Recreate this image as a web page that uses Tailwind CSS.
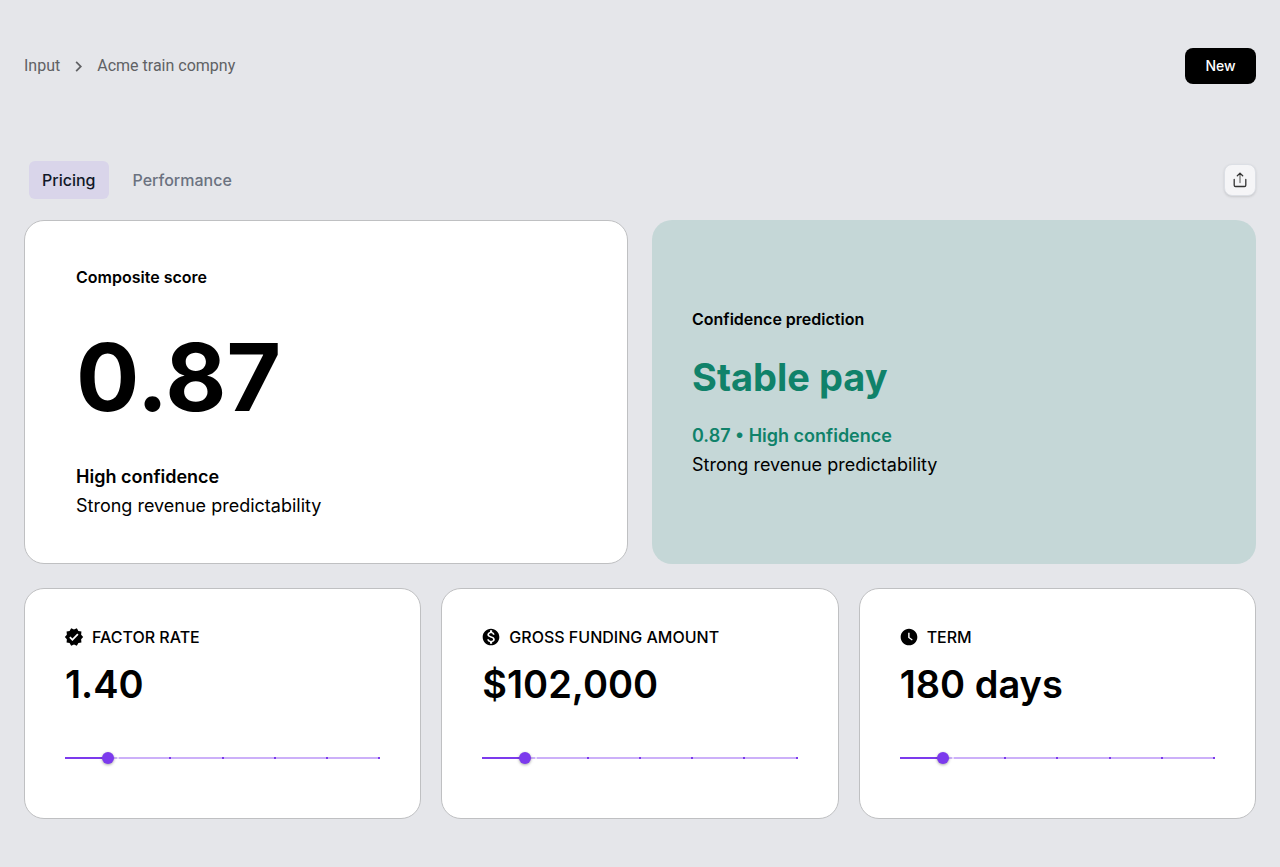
<!DOCTYPE html>
<html lang="en">
<head>
<meta charset="utf-8">
<meta name="viewport" content="width=device-width, initial-scale=1">
<title>Pricing</title>
<script src="https://cdn.jsdelivr.net/npm/@tailwindcss/browser@4"></script>
</head>
<body class="min-h-screen bg-[#e5e6ea] px-6 py-12 font-['Inter',sans-serif] text-black">
  <header class="flex h-9 items-center justify-between">
    <nav aria-label="Breadcrumb" class="flex items-center gap-2 font-['Roboto',sans-serif] text-base text-[#606164]">
      <a href="#">Input</a>
      <svg class="size-[21px]" viewBox="0 0 24 24" fill="currentColor" aria-hidden="true"><path d="M10 6 8.59 7.41 13.17 12l-4.58 4.59L10 18l6-6z"/></svg>
      <a href="#">Acme train compny</a>
    </nav>
    <button type="button" class="h-9 min-w-[71px] rounded-lg bg-black px-5 text-sm font-medium text-white">New</button>
  </header>

  <main>
    <div class="mt-[77px] flex items-center justify-between">
      <div role="tablist" class="ml-[5px] flex gap-3 text-base font-medium">
        <button type="button" role="tab" aria-selected="true" class="h-[38px] rounded-md bg-[#d9d5ea] px-[13px] text-[#111827]">Pricing</button>
        <button type="button" role="tab" aria-selected="false" class="h-[38px] rounded-md px-3 text-[#6b7280]">Performance</button>
      </div>
      <button type="button" aria-label="Share" class="flex size-8 items-center justify-center rounded-lg border border-[#dcdfe5] bg-[#f5f5f7] text-[#333] shadow-sm">
        <svg class="size-4" viewBox="0 0 16 16" fill="none" stroke="currentColor" stroke-width="1.3" stroke-linecap="round" stroke-linejoin="round" aria-hidden="true"><path d="M8 10.500V1.500" stroke="#777"/><path d="M5.300 3.700 8 1.300l2.700 2.400M2.200 7.500v5.700c0 .8.4 1.300 1.300 1.300h9c.9 0 1.300-.5 1.300-1.300V7.500"/></svg>
      </button>
    </div>

    <div class="mt-[21px] grid grid-cols-2 gap-6">
      <section class="flex min-h-[344px] flex-col justify-center rounded-[20px] border border-[#bfc0c2] bg-white px-[51px] pt-0.5">
        <h2 class="text-base leading-6 font-semibold">Composite score</h2>
        <p class="mt-10 mb-[38px] text-[94px] leading-[96px] font-bold">0.87</p>
        <p class="text-lg leading-7 font-semibold">High confidence</p>
        <p class="text-lg leading-[30px]">Strong revenue predictability</p>
      </section>
      <section class="flex min-h-[344px] flex-col justify-center rounded-[20px] bg-[#c5d7d7] px-10 pt-[3px]">
        <h2 class="text-base leading-6 font-semibold">Confidence prediction</h2>
        <p class="mt-[21px] mb-5 text-[38px] leading-[50px] font-bold text-[#10826a]">Stable pay</p>
        <p class="text-lg leading-7 font-semibold text-[#10826a]">0.87 • High confidence</p>
        <p class="text-lg leading-[30px]">Strong revenue predictability</p>
      </section>
    </div>

    <div class="mt-6 grid grid-cols-3 gap-5">
      <section class="rounded-[20px] border border-[#bfc0c2] bg-white px-10 pt-9 pb-[52px]">
        <label for="factor" class="flex items-center gap-2 text-base leading-6 font-medium">
          <svg class="-ml-px size-5" viewBox="0 0 24 24" fill="currentColor" aria-hidden="true"><path d="m23 12-2.44-2.79.34-3.69-3.61-.82-1.89-3.2L12 2.96 8.6 1.5 6.71 4.69 3.1 5.5l.34 3.7L1 12l2.44 2.79-.34 3.7 3.61.82L8.6 22.5l3.4-1.47 3.4 1.46 1.89-3.19 3.61-.82-.34-3.69zm-12.91 4.72-3.8-3.81 1.48-1.48 2.32 2.33 5.85-5.87 1.48 1.48z"/></svg>
          FACTOR RATE
        </label>
        <p class="mt-3 text-[38px] leading-[46px] font-semibold">1.40</p>
        <div class="mt-[43px] grid items-center">
          <div class="flex h-0.5 items-center justify-between bg-[#ccb0f9] [grid-area:1/1]"><i class="size-0.5 bg-[#7c3aed]"></i><i class="size-0.5 bg-[#e9dcfd]"></i><i class="size-0.5 bg-[#7c3aed]"></i><i class="size-0.5 bg-[#7c3aed]"></i><i class="size-0.5 bg-[#7c3aed]"></i><i class="size-0.5 bg-[#7c3aed]"></i><i class="size-0.5 bg-[#7c3aed]"></i></div>
          <div class="h-0.5 w-[14%] bg-[#7c3aed] [grid-area:1/1]"></div>
          <input id="factor" type="range" min="0" max="1000" value="122" class="h-4 w-full appearance-none bg-transparent [grid-area:1/1] [&::-webkit-slider-thumb]:size-3 [&::-webkit-slider-thumb]:appearance-none [&::-webkit-slider-thumb]:rounded-full [&::-webkit-slider-thumb]:bg-[#7c3aed] [&::-webkit-slider-thumb]:shadow-[0_1px_3px_rgba(0,0,0,0.35)]">
        </div>
      </section>
      <section class="rounded-[20px] border border-[#bfc0c2] bg-white px-10 pt-9 pb-[52px]">
        <label for="funding" class="flex items-center gap-2 text-base leading-6 font-medium">
          <svg class="-ml-px size-5" viewBox="0 0 24 24" fill="currentColor" aria-hidden="true"><path d="M12 2C6.48 2 2 6.48 2 12s4.48 10 10 10 10-4.48 10-10S17.52 2 12 2m1.41 16.09V20h-2.67v-1.93c-1.71-.36-3.16-1.46-3.27-3.4h1.96c.1 1.05.82 1.87 2.65 1.87 1.96 0 2.4-.98 2.4-1.59 0-.83-.44-1.61-2.67-2.14-2.48-.6-4.18-1.62-4.18-3.67 0-1.72 1.39-2.84 3.11-3.21V4h2.67v1.95c1.86.45 2.79 1.86 2.85 3.39H14.3c-.05-1.11-.64-1.87-2.22-1.87-1.5 0-2.4.68-2.4 1.64 0 .84.65 1.39 2.67 1.91s4.18 1.39 4.18 3.91c-.01 1.83-1.38 2.83-3.12 3.16"/></svg>
          GROSS FUNDING AMOUNT
        </label>
        <p class="mt-3 text-[38px] leading-[46px] font-semibold">$102,000</p>
        <div class="mt-[43px] grid items-center">
          <div class="flex h-0.5 items-center justify-between bg-[#ccb0f9] [grid-area:1/1]"><i class="size-0.5 bg-[#7c3aed]"></i><i class="size-0.5 bg-[#e9dcfd]"></i><i class="size-0.5 bg-[#7c3aed]"></i><i class="size-0.5 bg-[#7c3aed]"></i><i class="size-0.5 bg-[#7c3aed]"></i><i class="size-0.5 bg-[#7c3aed]"></i><i class="size-0.5 bg-[#7c3aed]"></i></div>
          <div class="h-0.5 w-[14%] bg-[#7c3aed] [grid-area:1/1]"></div>
          <input id="funding" type="range" min="0" max="1000" value="122" class="h-4 w-full appearance-none bg-transparent [grid-area:1/1] [&::-webkit-slider-thumb]:size-3 [&::-webkit-slider-thumb]:appearance-none [&::-webkit-slider-thumb]:rounded-full [&::-webkit-slider-thumb]:bg-[#7c3aed] [&::-webkit-slider-thumb]:shadow-[0_1px_3px_rgba(0,0,0,0.35)]">
        </div>
      </section>
      <section class="rounded-[20px] border border-[#bfc0c2] bg-white px-10 pt-9 pb-[52px]">
        <label for="term" class="flex items-center gap-2 text-base leading-6 font-medium">
          <svg class="-ml-px size-5" viewBox="0 0 24 24" fill="currentColor" aria-hidden="true"><path d="M12 2C6.5 2 2 6.5 2 12s4.5 10 10 10 10-4.5 10-10S17.500 2 12 2m3.550 14.200L11 13V7h1.700v5.200l3.700 2.900z"/></svg>
          TERM
        </label>
        <p class="mt-3 text-[38px] leading-[46px] font-semibold">180 days</p>
        <div class="mt-[43px] grid items-center">
          <div class="flex h-0.5 items-center justify-between bg-[#ccb0f9] [grid-area:1/1]"><i class="size-0.5 bg-[#7c3aed]"></i><i class="size-0.5 bg-[#e9dcfd]"></i><i class="size-0.5 bg-[#7c3aed]"></i><i class="size-0.5 bg-[#7c3aed]"></i><i class="size-0.5 bg-[#7c3aed]"></i><i class="size-0.5 bg-[#7c3aed]"></i><i class="size-0.5 bg-[#7c3aed]"></i></div>
          <div class="h-0.5 w-[14%] bg-[#7c3aed] [grid-area:1/1]"></div>
          <input id="term" type="range" min="0" max="1000" value="122" class="h-4 w-full appearance-none bg-transparent [grid-area:1/1] [&::-webkit-slider-thumb]:size-3 [&::-webkit-slider-thumb]:appearance-none [&::-webkit-slider-thumb]:rounded-full [&::-webkit-slider-thumb]:bg-[#7c3aed] [&::-webkit-slider-thumb]:shadow-[0_1px_3px_rgba(0,0,0,0.35)]">
        </div>
      </section>
    </div>
  </main>
</body>
</html>
